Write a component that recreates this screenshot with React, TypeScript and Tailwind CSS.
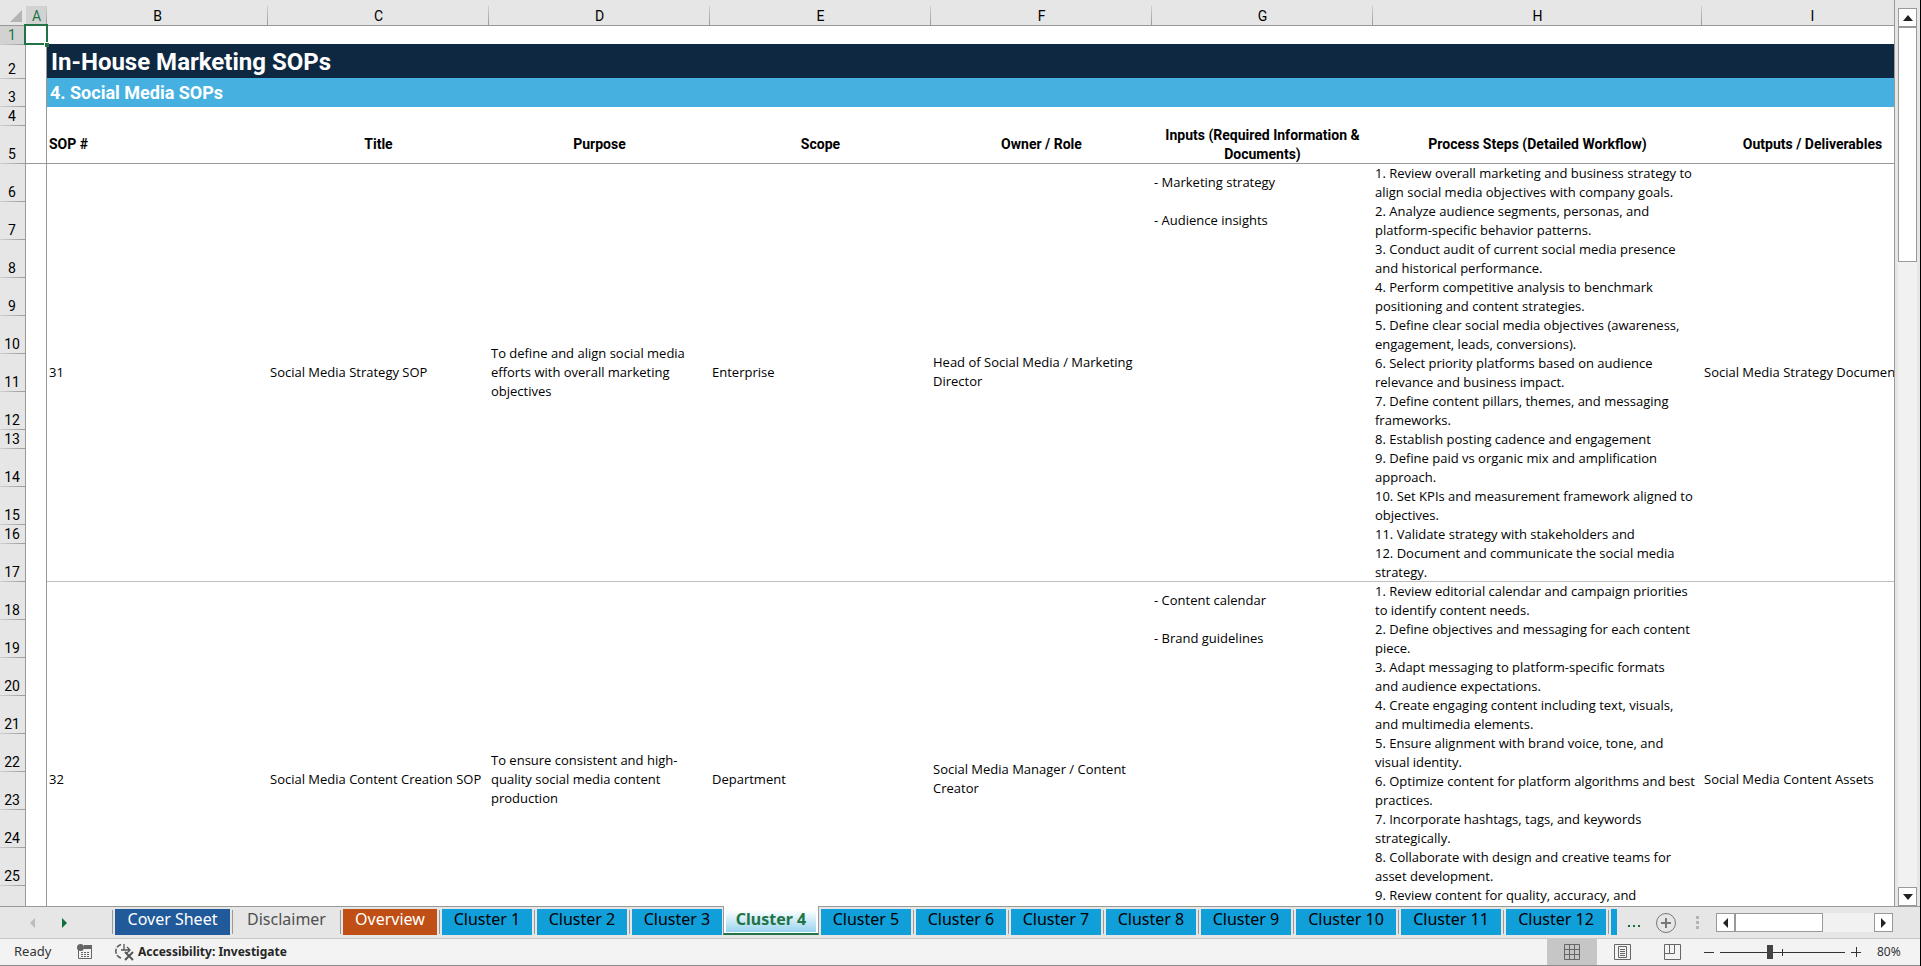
type Tone = 'blue' | 'plain' | 'orange' | 'sky' | 'active';

type Step = { row: number; height: string; step: string; input?: string };

type Sop = {
  id: number;
  title: string;
  purpose: string;
  scope: string;
  owner: string;
  output: string;
  steps: Step[];
};

const tall = 'h-[38px]';
const short = 'h-[19px]';

const columns = ['A', 'B', 'C', 'D', 'E', 'F', 'G', 'H', 'I'];

const headings = [
  'Title',
  'Purpose',
  'Scope',
  'Owner / Role',
  'Inputs (Required Information & Documents)',
  'Process Steps (Detailed Workflow)',
];

const sops: Sop[] = [
  {
    id: 31,
    title: 'Social Media Strategy SOP',
    purpose: 'To define and align social media efforts with overall marketing objectives',
    scope: 'Enterprise',
    owner: 'Head of Social Media / Marketing Director',
    output: 'Social Media Strategy Document',
    steps: [
      { row: 6, height: tall, input: '- Marketing strategy', step: '1. Review overall marketing and business strategy to\nalign social media objectives with company goals.' },
      { row: 7, height: tall, input: '- Audience insights', step: '2. Analyze audience segments, personas, and\nplatform-specific behavior patterns.' },
      { row: 8, height: tall, step: '3. Conduct audit of current social media presence\nand historical performance.' },
      { row: 9, height: tall, step: '4. Perform competitive analysis to benchmark\npositioning and content strategies.' },
      { row: 10, height: tall, step: '5. Define clear social media objectives (awareness,\nengagement, leads, conversions).' },
      { row: 11, height: tall, step: '6. Select priority platforms based on audience\nrelevance and business impact.' },
      { row: 12, height: tall, step: '7. Define content pillars, themes, and messaging\nframeworks.' },
      { row: 13, height: short, step: '8. Establish posting cadence and engagement' },
      { row: 14, height: tall, step: '9. Define paid vs organic mix and amplification\napproach.' },
      { row: 15, height: tall, step: '10. Set KPIs and measurement framework aligned to\nobjectives.' },
      { row: 16, height: short, step: '11. Validate strategy with stakeholders and' },
      { row: 17, height: tall, step: '12. Document and communicate the social media\nstrategy.' },
    ],
  },
  {
    id: 32,
    title: 'Social Media Content Creation SOP',
    purpose: 'To ensure consistent and high-quality social media content production',
    scope: 'Department',
    owner: 'Social Media Manager / Content Creator',
    output: 'Social Media Content Assets',
    steps: [
      { row: 18, height: tall, input: '- Content calendar', step: '1. Review editorial calendar and campaign priorities\nto identify content needs.' },
      { row: 19, height: tall, input: '- Brand guidelines', step: '2. Define objectives and messaging for each content\npiece.' },
      { row: 20, height: tall, step: '3. Adapt messaging to platform-specific formats\nand audience expectations.' },
      { row: 21, height: tall, step: '4. Create engaging content including text, visuals,\nand multimedia elements.' },
      { row: 22, height: tall, step: '5. Ensure alignment with brand voice, tone, and\nvisual identity.' },
      { row: 23, height: tall, step: '6. Optimize content for platform algorithms and best\npractices.' },
      { row: 24, height: tall, step: '7. Incorporate hashtags, tags, and keywords\nstrategically.' },
      { row: 25, height: tall, step: '8. Collaborate with design and creative teams for\nasset development.' },
      { row: 26, height: 'h-[92px]', step: '9. Review content for quality, accuracy, and' },
    ],
  },
];

const tabs: { label: string; tone: Tone }[] = [
  { label: 'Cover Sheet', tone: 'blue' },
  { label: 'Disclaimer', tone: 'plain' },
  { label: 'Overview', tone: 'orange' },
  { label: 'Cluster 1', tone: 'sky' },
  { label: 'Cluster 2', tone: 'sky' },
  { label: 'Cluster 3', tone: 'sky' },
  { label: 'Cluster 4', tone: 'active' },
  { label: 'Cluster 5', tone: 'sky' },
  { label: 'Cluster 6', tone: 'sky' },
  { label: 'Cluster 7', tone: 'sky' },
  { label: 'Cluster 8', tone: 'sky' },
  { label: 'Cluster 9', tone: 'sky' },
  { label: 'Cluster 10', tone: 'sky' },
  { label: 'Cluster 11', tone: 'sky' },
  { label: 'Cluster 12', tone: 'sky' },
];

const tones: Record<Tone, string> = {
  blue: 'w-[115px] bg-[#215a9b] text-white',
  plain: 'w-[103px] text-[#505050]',
  orange: 'w-[94px] bg-[#bf4f14] text-white',
  sky: 'w-[90px] bg-[#109fd9] text-black',
  active: '',
};

function RowHeader({ row, selected }: { row?: number; selected?: boolean }) {
  return (
    <th
      scope="row"
      className={`relative border-r border-[#999] p-0 text-center align-bottom font-[Roboto,sans-serif] font-normal ${
        selected ? 'bg-[#d2d2d2] text-[#217346]' : 'bg-[#e6e6e6] text-black'
      }`}
    >
      <span className="block pr-px text-sm leading-[19px]">{row}</span>
      <span className="absolute inset-x-0 bottom-0 h-px bg-linear-to-r from-[#d0d0d0] to-[#999]" />
    </th>
  );
}

function EmptyA() {
  return <td className="border-r border-[#999] p-0" />;
}

function SopRows({ sop, last }: { sop: Sop; last: boolean }) {
  const span = sop.steps.length;
  const line = last ? '' : 'shadow-[inset_0_-1px_0_#bfbfbf]';
  return (
    <>
      {sop.steps.map((s, i) => {
        const rowLine = i === span - 1 ? line : '';
        return (
          <tr key={s.row} className={`${s.height} font-['Open_Sans',sans-serif] text-[13px]`}>
            <RowHeader row={last && i === span - 1 ? undefined : s.row} />
            <EmptyA />
            {i === 0 && (
              <>
                <td rowSpan={span} className={`px-0.5 pt-0 pb-0.5 ${line}`}>{sop.id}</td>
                <td rowSpan={span} className={`px-0.5 pt-0 pb-0.5 whitespace-nowrap ${line}`}>{sop.title}</td>
                <td rowSpan={span} className={`px-0.5 pt-0 pb-0.5 ${line}`}>{sop.purpose}</td>
                <td rowSpan={span} className={`px-0.5 pt-0 pb-0.5 ${line}`}>{sop.scope}</td>
                <td rowSpan={span} className={`px-0.5 pt-0 pb-0.5 ${line}`}>{sop.owner}</td>
              </>
            )}
            <td className={`px-0.5 pt-0 pb-0.5 ${rowLine}`}>{s.input}</td>
            <td className={`px-0.5 py-0 align-top whitespace-pre ${rowLine}`}>{s.step}</td>
            {i === 0 && (
              <td rowSpan={span} className={`px-0.5 pt-0 pb-0.5 whitespace-nowrap ${line}`}>{sop.output}</td>
            )}
          </tr>
        );
      })}
    </>
  );
}

function Sheet() {
  return (
    <div className="min-w-0 flex-1 overflow-hidden border-r border-[#999] bg-white">
      <table className="w-full min-w-[1923px] table-fixed border-separate border-spacing-0 font-[Roboto,sans-serif] text-sm leading-[19px] text-black">
        <colgroup>
          <col className="w-[26px]" />
          <col className="w-[21px]" />
          <col className="w-[221px]" />
          <col className="w-[221px]" />
          <col className="w-[221px]" />
          <col className="w-[221px]" />
          <col className="w-[221px]" />
          <col className="w-[221px]" />
          <col className="w-[329px]" />
          <col />
        </colgroup>
        <thead>
          <tr className="h-[26px] bg-[#e6e6e6]">
            <td className="relative border-b border-[#999] p-0">
              <svg className="absolute right-1 bottom-[3px] size-3" viewBox="0 0 12 12" aria-hidden="true">
                <path d="M12 0V12H0Z" fill="#b4b4b4" />
              </svg>
            </td>
            {columns.map((c) => (
              <th
                key={c}
                scope="col"
                className={`relative border-b border-[#999] px-0 pt-[7px] pb-0 text-center text-sm leading-[18px] font-normal ${
                  c === 'A' ? 'bg-linear-to-b from-[#e6e6e6] from-25% to-[#d2d2d2] to-25% text-[#217346]' : ''
                }`}
              >
                {c}
                {c !== 'I' && (
                  <span className="absolute right-0 bottom-0 h-[19px] w-px bg-linear-to-b from-[#d0d0d0] to-[#999]" />
                )}
              </th>
            ))}
          </tr>
        </thead>
        <tbody>
          <tr className="h-[19px]">
            <RowHeader row={1} selected />
            <td className="relative border-r border-[#999] p-0">
              <span className="absolute -inset-x-0.5 -top-0.5 bottom-0 border-2 border-[#217346]" />
              <span className="absolute -right-[3px] -bottom-[2px] size-[5px] border-t border-l border-white bg-[#217346]" />
            </td>
            <td colSpan={8} className="p-0" />
          </tr>
          <tr className="h-[34px]">
            <RowHeader row={2} />
            <EmptyA />
            <td colSpan={8} className="bg-[#0f2841] px-1 py-0 text-2xl leading-8 font-bold text-white shadow-[0_-1px_0_#0f2841]">
              In-House Marketing SOPs
            </td>
          </tr>
          <tr className="h-[28px]">
            <RowHeader row={3} />
            <EmptyA />
            <td colSpan={8} className="bg-[#46b1e1] px-[3px] py-0 text-lg leading-7 font-bold text-white shadow-[0_-1px_0_#46b1e1]">
              4. Social Media SOPs
            </td>
          </tr>
          <tr className={short}>
            <RowHeader row={4} />
            <EmptyA />
            <td colSpan={8} className="p-0" />
          </tr>
          <tr className="h-[38px] font-bold">
            <RowHeader row={5} />
            <td className="border-r border-[#999] p-0 shadow-[inset_0_-1px_0_#999]" />
            <td className="px-0.5 pt-0 pb-0.5 shadow-[inset_0_-1px_0_#999]">SOP #</td>
            {headings.map((h) => (
              <td
                key={h}
                className={`px-0.5 pt-0 text-center shadow-[inset_0_-1px_0_#999] ${h.startsWith('Inputs') ? 'pb-0' : 'pb-0.5'}`}
              >
                {h}
              </td>
            ))}
            <td className="px-0 pt-0 pb-0.5 text-center whitespace-nowrap shadow-[inset_0_-1px_0_#999]">
              Outputs / Deliverables
            </td>
          </tr>
          {sops.map((s, i) => (
            <SopRows key={s.id} sop={s} last={i === sops.length - 1} />
          ))}
        </tbody>
      </table>
    </div>
  );
}

function VerticalScroll() {
  return (
    <div className="flex w-[25px] shrink-0 flex-col bg-[#e6e6e6] px-[3px] pt-2">
      <button aria-label="Scroll up" className="flex h-[19px] items-center justify-center border border-[#999] bg-white">
        <svg width="10" height="6" viewBox="0 0 10 6"><path d="M5 0L10 6H0Z" fill="#222" /></svg>
      </button>
      <div className="min-h-0 flex-1 bg-[#f1f1f1]">
        <div className="h-3/11 border border-[#999] bg-white" />
      </div>
      <button aria-label="Scroll down" className="flex h-[19px] items-center justify-center border border-[#999] bg-white">
        <svg width="10" height="6" viewBox="0 0 10 6"><path d="M5 6L10 0H0Z" fill="#222" /></svg>
      </button>
    </div>
  );
}

function SheetTab({ label, tone }: { label: string; tone: Tone }) {
  if (tone === 'active') {
    return (
      <button className="-mt-px -ml-[3px] flex h-[29px] w-24 shrink-0 border-x border-b-2 border-x-[#999] border-b-[#217346] bg-white px-0.5 pb-px font-bold text-[#217346]">
        <span className="mt-1 h-[22px] w-full bg-linear-to-b from-white to-[#96d3ee] leading-[18px]">{label}</span>
      </button>
    );
  }
  const wide = label.length > 9 && tone === 'sky';
  return (
    <button className={`mt-0.5 h-[26px] shrink-0 pb-[6px] leading-5 ${wide ? 'w-[100px] bg-[#109fd9] text-black' : tones[tone]}`}>
      {label}
    </button>
  );
}

function TabBar() {
  return (
    <div className="flex h-[33px] shrink-0 border-b border-[#c6c6c6] bg-[#e6e6e6]">
      <div className="flex min-w-0 flex-1 overflow-hidden">
        <div className="flex w-28 shrink-0 items-center gap-[27px] border-t border-[#999] pl-[30px]">
          <button aria-label="Previous sheet">
            <svg width="5" height="10" viewBox="0 0 5 10"><path d="M5 0V10L0 5Z" fill="#bbb" /></svg>
          </button>
          <button aria-label="Next sheet">
            <svg width="5" height="10" viewBox="0 0 5 10"><path d="M0 0V10L5 5Z" fill="#0f703b" /></svg>
          </button>
        </div>
        <div className="flex min-w-0 border-t border-[#999] font-['Noto_Sans',sans-serif] text-base">
          {tabs.map((t, i) => (
            <div key={t.label} className="flex shrink-0">
              <span
                className={
                  t.tone === 'active' || tabs[i - 1]?.tone === 'active'
                    ? 'mr-0.5'
                    : 'mt-[3px] mr-0.5 h-6 w-px bg-[#999]'
                }
              />
              <SheetTab label={t.label} tone={t.tone} />
              {t.tone !== 'active' && <span className="w-0.5" />}
            </div>
          ))}
          <span className="mt-[3px] mr-0.5 h-6 w-px shrink-0 bg-[#999]" />
          <span className="mt-0.5 h-[26px] w-1.5 shrink-0 bg-[#109fd9]" />
        </div>
        <div className="flex flex-1 items-center border-t border-[#999] pl-[11px]">
          <button aria-label="More sheets">
            <svg width="13" height="12" viewBox="0 0 13 12" fill="#0f703b">
              <path d="M0 8h2v2H0zM5 8h2v2H5zM10 8h2v2h-2z" />
            </svg>
          </button>
          <button aria-label="New sheet" className="ml-[15px]">
            <svg width="20" height="20" viewBox="0 0 20 20" fill="none">
              <circle cx="10" cy="10" r="9.5" stroke="#777" />
              <path d="M5 10h10M10 5v10" stroke="#777" strokeWidth="2" />
            </svg>
          </button>
        </div>
      </div>
      <div className="flex w-56 shrink-0 items-start border-t border-[#999] pt-1.5">
        <svg width="3" height="13" viewBox="0 0 3 13" className="mt-[3px] mr-[17px]" fill="#b4b4b4">
          <path d="M0 0h3v3H0zM0 5h3v3H0zM0 10h3v3H0z" />
        </svg>
        <button aria-label="Scroll left" className="flex h-[19px] w-[19px] items-center justify-center border border-[#999] bg-white">
          <svg width="5" height="10" viewBox="0 0 5 10"><path d="M5 0V10L0 5Z" fill="#222" /></svg>
        </button>
        <div className="h-[19px] w-[139px] bg-[#f1f1f1]">
          <div className="h-full w-[88px] border border-[#999] bg-white" />
        </div>
        <button aria-label="Scroll right" className="flex h-[19px] w-[19px] items-center justify-center border border-[#999] bg-white">
          <svg width="5" height="10" viewBox="0 0 5 10"><path d="M0 0V10L5 5Z" fill="#222" /></svg>
        </button>
      </div>
    </div>
  );
}

function StatusBar() {
  return (
    <div className="flex h-[27px] shrink-0 items-center border-b border-[#8c8c8c] bg-[#f3f3f3] font-['Noto_Sans',sans-serif] text-xs text-[#333]">
      <span className="w-[77px] pl-3.5 text-[13px]">Ready</span>
      <button aria-label="Record macro">
        <svg width="16" height="16" viewBox="0 0 16 16">
          <path d="M1.5 5v9.500h13V2H8" fill="none" stroke="#666" />
          <path d="M7 1h8v4H7z" fill="#666" />
          <circle cx="3.500" cy="3.500" r="3.500" fill="#666" />
          <path d="M4 8.500h8M4 10.500h8M4 12.500h8" stroke="#666" strokeDasharray="2 1" />
        </svg>
      </button>
      <button className="ml-[22px] flex items-center gap-[3px] font-bold text-[#262626]">
        <svg width="20" height="18" viewBox="0 0 20 18" fill="none" stroke="#555">
          <path d="M6 1.500A7 7 0 0 0 6 15" strokeWidth="1.500" strokeDasharray="5 1.500" />
          <path d="M9 1v6M6 7h8M12 4l3 3-3 3" strokeWidth="1.300" />
          <path d="M10 9l8 8M18 9l-8 8" strokeWidth="2" />
        </svg>
        Accessibility: Investigate
      </button>
      <div className="ml-auto flex h-full items-center">
        <button aria-label="Normal view" className="flex h-full w-[50px] items-center justify-center bg-[#c6c6c6]">
          <svg width="16" height="16" viewBox="0 0 16 16" fill="none" stroke="#666">
            <path d="M.5.5h15v15H.5zM.5 5.500h15M.5 10.500h15M5.500.5v15M10.500.5v15" />
          </svg>
        </button>
        <button aria-label="Page layout view" className="flex h-full w-[50px] items-center justify-center">
          <svg width="17" height="16" viewBox="0 0 17 16" fill="none" stroke="#666">
            <path d="M.5.5h16v15H.5zM4.500 2.500h8v11h-8zM6 5.500h5M6 7.500h5M6 9.500h5M6 11.500h5" />
          </svg>
        </button>
        <button aria-label="Page break preview" className="flex h-full w-[50px] items-center justify-center">
          <svg width="17" height="16" viewBox="0 0 17 16" fill="none" stroke="#666">
            <path d="M.5.5h16v15H.5zM.5 9.500h10v-9M5.500.5v9" />
          </svg>
        </button>
        <button aria-label="Zoom out" className="ml-[7px]">
          <svg width="10" height="10" viewBox="0 0 10 10"><path d="M0 5.500h10" stroke="#333" /></svg>
        </button>
        <svg width="125" height="14" viewBox="0 0 125 14" className="mx-1.5" aria-hidden="true">
          <path d="M0 7.500h125M62.500 4v7" stroke="#333" />
          <path d="M47 0h6v14h-6z" fill="#444" />
        </svg>
        <button aria-label="Zoom in">
          <svg width="10" height="10" viewBox="0 0 10 10"><path d="M0 5.500h10M5.500 0v10" stroke="#333" /></svg>
        </button>
        <button className="w-[59px] pl-4 text-left">80%</button>
      </div>
    </div>
  );
}

export default function App() {
  return (
    <main className="flex h-screen flex-col overflow-hidden border-r border-black bg-[#e6e6e6]">
      <div className="flex min-h-0 flex-1">
        <Sheet />
        <VerticalScroll />
      </div>
      <TabBar />
      <StatusBar />
    </main>
  );
}
